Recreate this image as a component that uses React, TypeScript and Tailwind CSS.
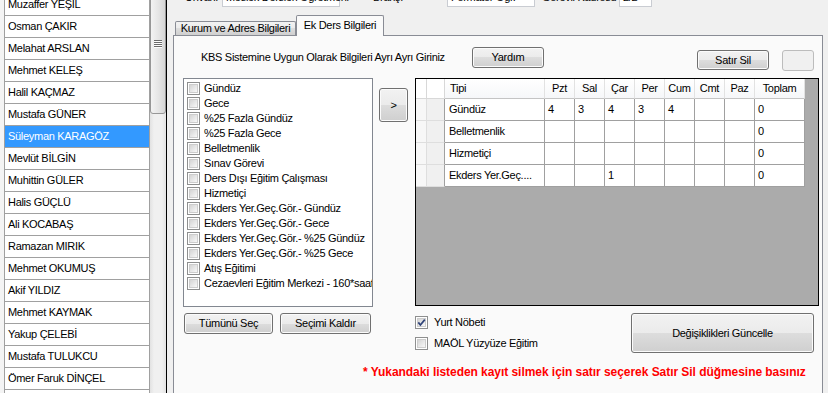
import type { ReactNode } from 'react';

const names = [
  'Muzaffer YEŞİL',
  'Osman ÇAKIR',
  'Melahat ARSLAN',
  'Mehmet KELEŞ',
  'Halil KAÇMAZ',
  'Mustafa GÜNER',
  'Süleyman KARAGÖZ',
  'Mevlüt BİLGİN',
  'Muhittin GÜLER',
  'Halis GÜÇLÜ',
  'Ali KOCABAŞ',
  'Ramazan MIRIK',
  'Mehmet OKUMUŞ',
  'Akif YILDIZ',
  'Mehmet KAYMAK',
  'Yakup ÇELEBİ',
  'Mustafa TULUKCU',
  'Ömer Faruk DİNÇEL',
  'Hasan DEMİR',
];

const dersTipleri = [
  'Gündüz',
  'Gece',
  '%25 Fazla Gündüz',
  '%25 Fazla Gece',
  'Belletmenlik',
  'Sınav Görevi',
  'Ders Dışı Eğitim Çalışması',
  'Hizmetiçi',
  'Ekders Yer.Geç.Gör.- Gündüz',
  'Ekders Yer.Geç.Gör.- Gece',
  'Ekders Yer.Geç.Gör.- %25 Gündüz',
  'Ekders Yer.Geç.Gör.- %25 Gece',
  'Atış Eğitimi',
  'Cezaevleri Eğitim Merkezi - 160*saat',
];

const columns = ['Tipi', 'Pzt', 'Sal', 'Çar', 'Per', 'Cum', 'Cmt', 'Paz', 'Toplam'];

const rows = [
  ['Gündüz', '4', '3', '4', '3', '4', '', '', '0'],
  ['Belletmenlik', '', '', '', '', '', '', '', '0'],
  ['Hizmetiçi', '', '', '', '', '', '', '', '0'],
  ['Ekders Yer.Geç....', '', '', '1', '', '', '', '', '0'],
];

function CheckBox({ checked = false }: { checked?: boolean }) {
  return (
    <span className="relative flex h-[13px] w-[13px] shrink-0 border border-[#8e8f8f] bg-white p-[1px]">
      <span className="flex-1 border border-[#cdcdcd] bg-[linear-gradient(135deg,#d4d4d4,#f8f8f8)]" />
      {checked && (
        <svg className="absolute left-0 top-0" width="11" height="11" viewBox="0 0 11 11">
          <path d="M2.3 5.4 L4.4 8 L8.8 2.6" fill="none" stroke="#2f4379" strokeWidth="1.7" />
        </svg>
      )}
    </span>
  );
}

function WinButton({ className = '', children }: { className?: string; children?: ReactNode }) {
  return (
    <div
      className={`flex shrink-0 items-center justify-center rounded-[3px] border border-[#707070] bg-[linear-gradient(#f2f2f2_0%,#ebebeb_50%,#dddddd_50%,#cfcfcf_100%)] shadow-[inset_0_0_0_1px_#fbfbfb] text-black ${className}`}
    >
      {children}
    </div>
  );
}

function Scrollbar() {
  return (
    <div className="flex w-[16px] flex-col bg-[linear-gradient(90deg,#e2e2e2,#f0f0f0_25%,#f0f0f0_75%,#e2e2e2)]">
      <div className="-mt-[28px] flex h-[142px] flex-col items-center justify-center gap-[1px] rounded-b-[3px] border border-[#979797] bg-[linear-gradient(90deg,#f3f3f3,#e6e6e6_50%,#d6d6d6)]">
        {[0, 1, 2, 3].map((i) => (
          <span key={i} className="h-[1px] w-[8px] bg-[#6b6b6b] shadow-[0_1px_0_#fdfdfd]" />
        ))}
      </div>
    </div>
  );
}

export default function App() {
  return (
    <div className="flex h-[393px] w-[828px] overflow-hidden bg-[#f0f0f0] font-['Liberation_Sans',Arial,sans-serif] text-[11px] leading-[13px] tracking-[-0.3px] text-black">
      {/* personel listesi */}
      <div className="flex h-full w-[167px] shrink-0 border-r border-black">
        <div className="w-[5px] border-r border-[#a0a0a0] bg-[#f4f4f4]" />
        <div className="w-[145px] border-r border-[#a0a0a0] bg-white">
          <div className="-mt-[6px]">
            {names.map((n, i) => (
              <div
                key={n}
                className={`flex h-[22px] items-center border-b border-[#a0a0a0] pl-[3px] whitespace-nowrap ${
                  i === 6 ? 'bg-[#3399ff] text-white' : ''
                }`}
              >
                {n}
              </div>
            ))}
          </div>
        </div>
        <Scrollbar />
      </div>

      <div className="flex flex-1 flex-col">
        {/* ust alanlar (kesik) */}
        <div className="flex h-[7px] shrink-0 items-end overflow-hidden">
          <div className="mb-[3px] ml-[18px] w-[37px] whitespace-nowrap">Ünvanı</div>
          <div className="h-[20px] w-[118px] border border-[#c9ccd2] bg-white pl-[3px] pt-[3px] whitespace-nowrap">
            Meslek Dersleri Öğretmeni
          </div>
          <div className="mb-[3px] w-[107px] pl-[33px] whitespace-nowrap">Branşı</div>
          <div className="h-[20px] w-[88px] border border-[#c9ccd2] bg-white pl-[3px] pt-[3px] whitespace-nowrap">
            Formatör Öğr.
          </div>
          <div className="mb-[3px] w-[84px] pl-[7px] whitespace-nowrap">Görevli Kadrosu</div>
          <div className="h-[20px] w-[33px] border border-[#c9ccd2] bg-white pl-[3px] pt-[3px] whitespace-nowrap">
            2/2
          </div>
        </div>

        {/* sekmeler */}
        <div className="flex h-[28px] shrink-0 items-end pl-[8px]">
          <div className="flex h-[14px] w-[121px] items-center justify-center rounded-t-[2px] border border-b-0 border-[#898c95] bg-[linear-gradient(#f2f2f2,#ebebeb_50%,#dddddd_50%,#cfcfcf)] whitespace-nowrap">
            Kurum ve Adres Bilgileri
          </div>
          <div className="relative z-10 -mb-[1px] flex h-[21px] w-[88px] items-center justify-center rounded-t-[2px] border border-b-0 border-[#898c95] bg-[#fafafa] pb-[2px] whitespace-nowrap">
            Ek Ders Bilgileri
          </div>
        </div>

        <div className="ml-[6px] h-[370px] w-[650px] shrink-0 border border-[#898c95] bg-[#fafafa] pl-[9px]">
          {/* baslik satiri */}
          <div className="flex h-[42px] items-start">
            <div className="ml-[18px] mt-[15px] w-[271px] whitespace-nowrap">
              KBS Sistemine Uygun Olarak Bilgileri Ayrı Ayrı Giriniz
            </div>
            <WinButton className="mt-[11px] h-[21px] w-[72px]">Yardım</WinButton>
            <WinButton className="ml-[153px] mt-[14px] h-[20px] w-[72px]">Satır Sil</WinButton>
            <div className="ml-[13px] mt-[14px] h-[21px] w-[32px] rounded-[3px] border border-[#bcbcbc] bg-[#f0f0f0]" />
          </div>

          {/* liste + tablo */}
          <div className="flex h-[229px] items-start">
            <div className="h-[229px] w-[190px] shrink-0 overflow-hidden border border-[#828790] bg-white pl-[3px] pt-[2px]">
              {dersTipleri.map((t) => (
                <div key={t} className="flex h-[15px] items-center gap-[4px] whitespace-nowrap">
                  <CheckBox />
                  <span>{t}</span>
                </div>
              ))}
            </div>

            <WinButton className="ml-[6px] mt-[10px] h-[34px] w-[29px]">&gt;</WinButton>

            <div className="ml-[7px] h-[228px] w-[404px] shrink-0 border border-black bg-[#ababab]">
              <div className="grid w-[389px] grid-cols-[11px_18px_100px_30px_30px_30px_30px_30px_30px_30px_50px]">
                <div className="h-[20px] border-b border-r border-[#d8d8d8] bg-white" />
                <div className="h-[20px] border-b border-r border-[#d8d8d8] bg-white" />
                {columns.map((c, i) => (
                  <div
                    key={c}
                    className={`flex h-[20px] items-center border-b border-r border-b-[#c4c4c4] border-r-[#e2e2e2] bg-[linear-gradient(#ffffff,#f6f7f9)] ${
                      i === 0 ? 'pl-[5px]' : 'justify-center'
                    }`}
                  >
                    {c}
                  </div>
                ))}
                {rows.map((r) => (
                  <div key={r[0]} className="contents">
                    <div className="h-[22px] border-b border-r border-[#dedede] bg-[#f7f7f7]" />
                    <div className="h-[22px] border-b border-r border-b-[#dedede] border-r-[#a0a0a0] bg-[#f0f0f0]" />
                    {r.map((v, j) => (
                      <div
                        key={j}
                        className={`flex h-[22px] items-center overflow-hidden border-b border-r border-[#a0a0a0] bg-white whitespace-nowrap ${
                          j === 0 ? 'pl-[4px]' : 'pl-[3px]'
                        }`}
                      >
                        {v}
                      </div>
                    ))}
                  </div>
                ))}
              </div>
            </div>
          </div>

          {/* alt satir */}
          <div className="flex">
            <div className="flex w-[232px] gap-[7px] pl-[1px] pt-[6px]">
              <WinButton className="h-[21px] w-[89px]">Tümünü Seç</WinButton>
              <WinButton className="h-[21px] w-[91px]">Seçimi Kaldır</WinButton>
            </div>
            <div className="flex w-[216px] flex-col gap-[6px] pt-[8px]">
              <div className="flex h-[15px] items-center gap-[6px]">
                <CheckBox checked />
                <span>Yurt Nöbeti</span>
              </div>
              <div className="flex h-[15px] items-center gap-[6px]">
                <CheckBox />
                <span>MAÖL Yüzyüze Eğitim</span>
              </div>
            </div>
            <WinButton className="mt-[6px] h-[40px] w-[183px]">Değişiklikleri Güncelle</WinButton>
          </div>

          <div className="ml-[180px] mt-[12px] whitespace-nowrap text-[12px] font-bold leading-[14px] tracking-[-0.05px] text-[#ff0000]">
            * Yukandaki listeden kayıt silmek için satır seçerek Satır Sil düğmesine basınız
          </div>
        </div>
      </div>
    </div>
  );
}
